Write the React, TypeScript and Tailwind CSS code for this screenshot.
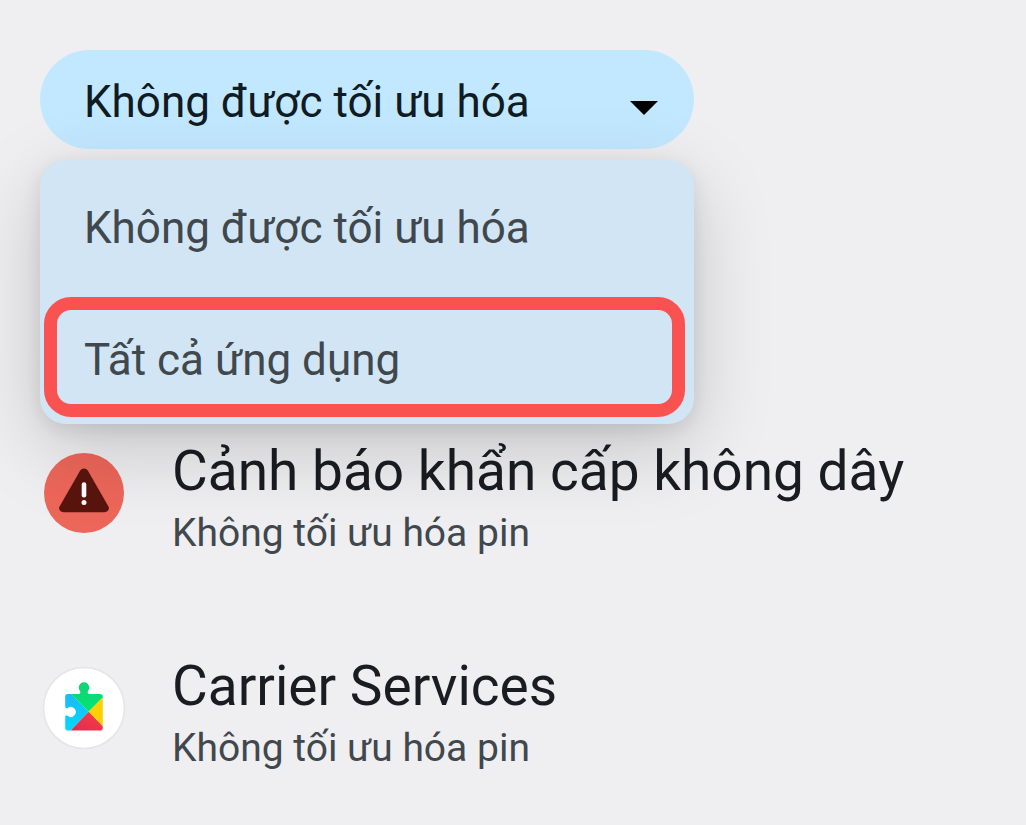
import { useState } from "react";

const filters = ["Không được tối ưu hóa", "Tất cả ứng dụng"];

function WarningIcon() {
  return (
    <svg viewBox="0 0 80 80" className="size-20" aria-hidden="true">
      <circle cx="40" cy="40" r="40" fill="#ed665a" />
      <path
        d="M36.2 17.6a4.6 4.6 0 0 1 7.6 0L64.3 53.2c1.7 3-.4 6-3.8 6h-41c-3.4 0-5.5-3-3.8-6Z"
        fill="#59150d"
      />
      <path d="M40 31.5v10.8" stroke="#fff" strokeWidth="4.6" strokeLinecap="round" />
      <circle cx="40" cy="49.6" r="2.5" fill="#fff" />
    </svg>
  );
}

function ServicesIcon() {
  return (
    <svg viewBox="0 0 80 80" className="size-20 overflow-visible" aria-hidden="true">
      <defs>
        <clipPath id="puzzle">
          <path d="M24 26h11c1.2 0 1.7-1.6 1-3A5.3 5.3 0 1 1 44 23c-.7 1.4-.2 3 1 3H56a2.8 2.8 0 0 1 2.8 2.8v31a2.8 2.8 0 0 1-2.8 2.8H24a2.8 2.8 0 0 1-2.8-2.8V49c0-1.2 1.3-1.7 2.4-1.2a5 5 0 1 0 0-7.8c-1.1.5-2.4 0-2.4-1.2V28.8A2.8 2.8 0 0 1 24 26Z" />
        </clipPath>
        <linearGradient id="blue" x1="0" y1="0" x2="0" y2="1">
          <stop offset="0" stopColor="#1bb8f5" />
          <stop offset="1" stopColor="#00dcff" />
        </linearGradient>
        <linearGradient id="green" x1="0" y1="0" x2="0" y2="1">
          <stop offset="0" stopColor="#18cf72" />
          <stop offset="1" stopColor="#00e676" />
        </linearGradient>
        <linearGradient id="red" x1="0" y1="1" x2="1" y2="0">
          <stop offset="0" stopColor="#d92a55" />
          <stop offset="1" stopColor="#ff3d42" />
        </linearGradient>
      </defs>
      <circle cx="40" cy="40" r="40.5" fill="#fff" stroke="#e5e5e8" strokeWidth="1.5" />
      <g clipPath="url(#puzzle)">
        <path d="M20 25h6.2l18.4 18.8L25.2 64H20Z" fill="url(#blue)" />
        <path d="M25 12h35v16.2L44.6 43.8 25 24Z" fill="url(#green)" />
        <path d="M60 28.2v31.2L44.6 43.8Z" fill="#ffcf00" />
        <path d="M44.6 43.8 60 59.4V64H25.2Z" fill="url(#red)" />
      </g>
    </svg>
  );
}

const apps = [
  { name: "Cảnh báo khẩn cấp không dây", status: "Không tối ưu hóa pin", Icon: WarningIcon },
  { name: "Carrier Services", status: "Không tối ưu hóa pin", Icon: ServicesIcon },
];

export default function App() {
  const [selected, setSelected] = useState(filters[0]);
  const [open, setOpen] = useState(true);

  return (
    <main className="min-h-screen bg-[#efeff2] px-10 pt-[50px] font-['Roboto',sans-serif]">
      <div className="relative w-full max-w-[654px]">
        <button
          type="button"
          aria-haspopup="listbox"
          aria-expanded={open}
          onClick={() => setOpen(!open)}
          className="flex w-full items-center justify-between rounded-full bg-[#c2e8ff] pt-5 pr-9 pb-[15px] pl-11 text-left text-[44px] leading-[64px] text-[#101b22]"
        >
          <span>{selected}</span>
          <svg viewBox="0 0 28 14" className="mt-3 h-[14px] w-7" aria-hidden="true">
            <path d="M0 0h28L14 14Z" fill="#000" />
          </svg>
        </button>
        {open && (
          <ul
            role="listbox"
            aria-label="Bộ lọc ứng dụng"
            className="absolute inset-x-0 top-full z-10 mt-[11px] rounded-[26px] bg-[#d2e5f4] text-[44px] leading-[64px] text-[#40484d] shadow-[0_24px_80px_rgba(0,0,0,0.18),0_6px_20px_rgba(0,0,0,0.09)]"
          >
            {filters.map((label, i) => (
              <li key={label} role="option" aria-selected={label === selected} className="pt-[5px] pr-[9px] pb-[7px] pl-1">
                <button
                  type="button"
                  onClick={() => {
                    setSelected(label);
                    setOpen(false);
                  }}
                  className={
                    "block w-full rounded-[27px] border-[13px] pt-[18px] pb-3 pl-[27px] text-left " +
                    (i === 1 ? "border-[#fa5250]" : "border-transparent")
                  }
                >
                  {label}
                </button>
              </li>
            ))}
          </ul>
        )}
      </div>

      <ul className="mt-[290px] flex flex-col gap-[91px]">
        {apps.map(({ name, status, Icon }) => (
          <li key={name} className="flex items-start gap-12 pl-1">
            <div className="shrink-0 pt-[14px]">
              <Icon />
            </div>
            <div>
              <h2 className="text-[55px] leading-[64px] text-[#191c20]">{name}</h2>
              <p className="text-[39px] leading-[60px] text-[#40484d]">{status}</p>
            </div>
          </li>
        ))}
      </ul>
    </main>
  );
}
